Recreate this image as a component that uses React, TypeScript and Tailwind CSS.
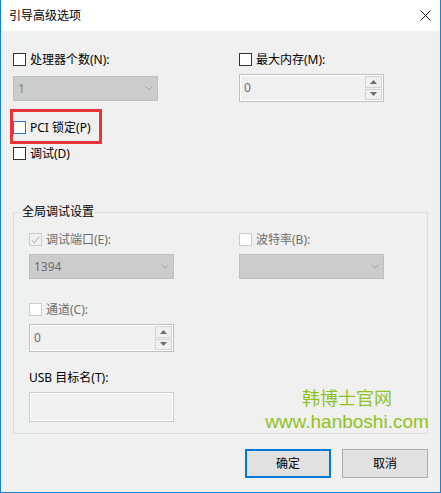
import React from "react";

type CheckProps = { checked?: boolean; disabled?: boolean; focus?: boolean };

function Check({ checked = false, disabled = false, focus = false }: CheckProps) {
  const cls = disabled
    ? checked
      ? "border-[#cccccc] bg-[#f0f0f0]"
      : "border-[#cccccc] bg-white"
    : focus
      ? "border-[#2a7bd6] bg-white"
      : "border-[#333333] bg-white";
  return (
    <span className={`w-[13px] h-[13px] border shrink-0 flex items-center justify-center ${cls}`}>
      {checked && (
        <svg width="9" height="8" viewBox="0 0 9 8">
          <path d="M0.8 4.2 L3.3 6.6 L8.2 0.9" stroke="#bfbfbf" strokeWidth="1.3" fill="none" />
        </svg>
      )}
    </span>
  );
}

function CheckRow({
  label,
  checked,
  disabled,
  focus,
}: {
  label: string;
  checked?: boolean;
  disabled?: boolean;
  focus?: boolean;
}) {
  return (
    <div className="flex items-center h-[13px] gap-[4px]">
      <Check checked={checked} disabled={disabled} focus={focus} />
      <span className={`text-[12px] leading-[16px] whitespace-nowrap ${disabled ? "text-[#6d6d6d]" : "text-black"}`}>
        {label}
      </span>
    </div>
  );
}

function Select({ value, dark = false }: { value: string; dark?: boolean }) {
  return (
    <div className="w-[145px] h-[25px] bg-[#cccccc] border border-[#bfbfbf] flex items-center justify-between pl-[4px] pr-[4px]">
      <span className={`text-[12px] leading-[16px] ${dark ? "text-[#6d6d6d]" : "text-[#838383]"}`}>{value}</span>
      <svg width="8" height="5" viewBox="0 0 8 5">
        <path d="M0.5 0.5 L4 4 L7.5 0.5" stroke="#a3a3a3" strokeWidth="1" fill="none" />
      </svg>
    </div>
  );
}

function Spin() {
  return (
    <div className="w-[145px] h-[28px] border border-[#bfbfbf] bg-[#f0f0f0] shadow-[inset_0_0_0_1px_#ffffff] flex">
      <span className="flex-1 pl-[4px] flex items-center text-[12px] leading-[16px] text-[#6d6d6d]">0</span>
      <div className="w-[18px] flex flex-col gap-[1px] py-[1px] pr-[1px]">
        <div className="flex-1 border border-[#d4d4d4] bg-[#f0f0f0] flex items-center justify-center">
          <svg width="7" height="4" viewBox="0 0 7 4">
            <path d="M0 4 L3.5 0 L7 4 Z" fill="#6d6d6d" />
          </svg>
        </div>
        <div className="flex-1 border border-[#d4d4d4] bg-[#f0f0f0] flex items-center justify-center">
          <svg width="7" height="4" viewBox="0 0 7 4">
            <path d="M0 0 L3.5 4 L7 0 Z" fill="#6d6d6d" />
          </svg>
        </div>
      </div>
    </div>
  );
}

export default function App() {
  return (
    <div className="w-[441px] h-[493px] flex flex-col border-x border-b border-[#1883d7] bg-[#f0f0f0] font-['Noto_Sans','Noto_Sans_CJK_SC',sans-serif] text-black">
      {/* Title bar */}
      <div className="h-[31px] bg-white flex items-center justify-between pl-[8px] pr-[9px] shrink-0">
        <span className="text-[12px] leading-[16px]">引导高级选项</span>
        <svg width="11" height="11" viewBox="0 0 11 11">
          <path d="M0.5 0.5 L10.5 10.5 M10.5 0.5 L0.5 10.5" stroke="#111" strokeWidth="1" />
        </svg>
      </div>

      {/* Content */}
      <div className="flex-1 relative pl-[12px] flex flex-col">
        <div className="grid grid-cols-[226px_1fr] pt-[22px]">
          <div className="flex flex-col">
            <CheckRow label="处理器个数(N):" />
            <div className="mt-[10px]">
              <Select value="1" />
            </div>
          </div>
          <div className="flex flex-col">
            <CheckRow label="最大内存(M):" />
            <div className="mt-[8px]">
              <Spin />
            </div>
          </div>
        </div>

        <div className="mt-[19px]">
          <CheckRow label="PCI 锁定(P)" focus />
        </div>
        <div className="mt-[13px]">
          <CheckRow label="调试(D)" />
        </div>

        <fieldset className="mt-[44px] w-[415px] h-[230px] border border-[#dcdcdc] pl-[15px]">
          <legend className="ml-[-8px] px-[1px] text-[12px] leading-[16px]">全局调试设置</legend>
          <div className="grid grid-cols-[210px_1fr] mt-[13px]">
            <div className="flex flex-col">
              <CheckRow label="调试端口(E):" checked disabled />
              <div className="mt-[8px]">
                <Select value="1394" dark />
              </div>
            </div>
            <div className="flex flex-col">
              <CheckRow label="波特率(B):" disabled />
              <div className="mt-[8px]">
                <Select value="" />
              </div>
            </div>
          </div>
          <div className="mt-[24px]">
            <CheckRow label="通道(C):" disabled />
          </div>
          <div className="mt-[8px]">
            <Spin />
          </div>
          <div className="mt-[18px] text-[12px] leading-[16px]">USB 目标名(T):</div>
          <div className="mt-[6px] w-[145px] h-[30px] border border-[#cccccc] bg-[#f0f0f0] shadow-[inset_0_0_0_1px_#ffffff]" />
        </fieldset>

        <div className="w-[415px] flex justify-end gap-[11px] mt-[15px]">
          <button className="w-[86px] h-[29px] border-2 border-[#0078d7] bg-[#e1e1e1] text-[12px] leading-[16px]">
            确定
          </button>
          <button className="w-[86px] h-[29px] border border-[#adadad] bg-[#e1e1e1] text-[12px] leading-[16px]">
            取消
          </button>
        </div>

        {/* Annotation overlay */}
        <div className="absolute left-[9px] top-[78px] w-[92px] h-[35px] border-[3px] border-[#ee3338] pointer-events-none" />

        {/* Watermark overlay */}
        <div className="absolute left-[245px] top-[355px] w-[202px] flex flex-col items-center text-[#8ec31f] pointer-events-none">
          <span className="text-[18px] leading-[24px]">韩博士官网</span>
          <span className="text-[19px] leading-[24px] font-['Liberation_Sans',sans-serif]">www.hanboshi.com</span>
        </div>
      </div>
    </div>
  );
}
